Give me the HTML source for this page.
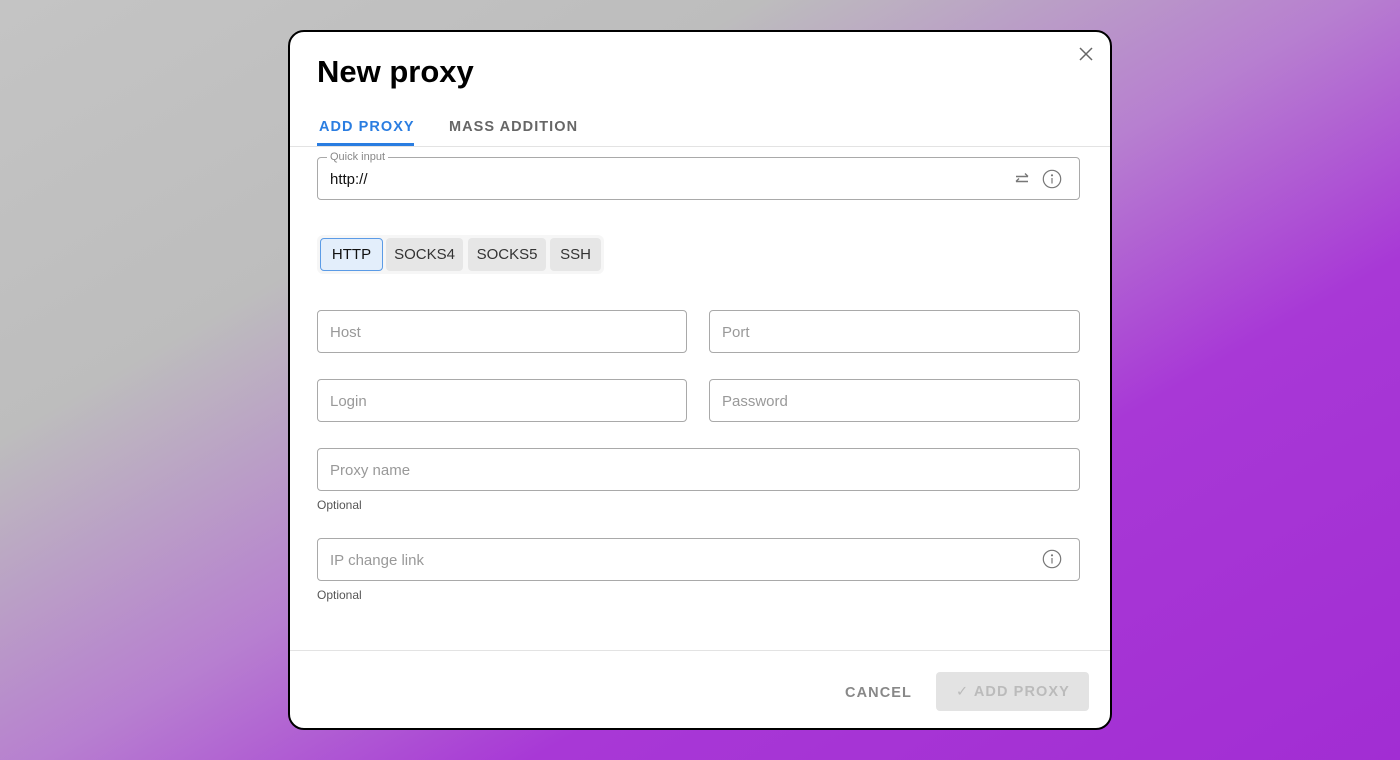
<!DOCTYPE html>
<html><head><style>
*{box-sizing:border-box;margin:0;padding:0}
body{width:1400px;height:760px;overflow:hidden;font-family:"Liberation Sans",Arial,sans-serif;background:linear-gradient(150deg,#c4c4c4 0%,#bdbdbd 28%,#b77fd0 50%,#a838d6 68%,#a22dd3 100%);position:relative}
.dlg{position:absolute;left:288px;top:30px;width:824px;height:700px;background:#fff;border:2px solid #000;border-radius:16px;overflow:hidden}
.w{position:absolute;left:-2px;top:-2px;width:824px;height:700px}
.a{position:absolute}
h1{position:absolute;left:29px;top:24px;font-size:31px;font-weight:700;color:#000}
.tab{position:absolute;top:89px;font-size:14.5px;font-weight:700;letter-spacing:1.05px}
.inp{position:absolute;border:1px solid #a9a9a9;border-radius:4px;height:43px;font-size:15px;color:#999;padding:13px 12px}
.opt{position:absolute;font-size:12px;color:#555}
.chip{position:absolute;top:207px;height:33px;background:#e6e6e6;border-radius:4px;font-size:15px;color:#333;text-align:center;line-height:33px}
</style></head><body>
<div class="dlg"><div class="w">
<h1>New proxy</h1>
<svg class="a" style="left:791px;top:17px" width="14" height="14" viewBox="0 0 14 14"><path d="M1 1L13 13M13 1L1 13" stroke="#666" stroke-width="1.5"/></svg>
<div class="tab" style="left:31px;color:#2a7de1">ADD PROXY</div>
<div class="tab" style="left:161px;color:#666">MASS ADDITION</div>
<div class="a" style="left:29px;top:113px;width:97px;height:3px;background:#2a7de1"></div>
<div class="a" style="left:0;top:116px;width:824px;height:1px;background:#e3e3e3"></div>
<div class="inp" style="left:29px;top:127px;width:763px;color:#111;padding-top:13px">http://</div>
<div class="a" style="left:39px;top:121px;background:#fff;padding:0 3px;font-size:11px;color:#888">Quick input</div>
<svg class="a" style="left:725px;top:140px" width="18" height="18" viewBox="0 0 18 18" fill="none" stroke="#777" stroke-width="1.4"><path d="M3 6.5H15M12 3.5L15 6.5M15 11.5H3M6 8.5L3 11.5"/></svg>
<svg class="a" style="left:754px;top:139px" width="20" height="20" viewBox="0 0 20 20" fill="none" stroke="#777" stroke-width="1.2"><circle cx="10" cy="10" r="8.7"/><path d="M10 9V14.5"/><circle cx="10" cy="6.3" r=".5" fill="#777"/></svg>
<div class="a" style="left:29px;top:205px;width:287px;height:39px;background:#f6f6f6;border-radius:6px"></div>
<div class="chip" style="left:32px;top:208px;width:63px;background:#e3eefb;border:1px solid #5b9be6;color:#111;line-height:31px">HTTP</div>
<div class="chip" style="left:98px;top:208px;width:77px">SOCKS4</div>
<div class="chip" style="left:180px;top:208px;width:78px">SOCKS5</div>
<div class="chip" style="left:262px;top:208px;width:51px">SSH</div>
<div class="inp" style="left:29px;top:280px;width:370px">Host</div>
<div class="inp" style="left:421px;top:280px;width:371px">Port</div>
<div class="inp" style="left:29px;top:349px;width:370px">Login</div>
<div class="inp" style="left:421px;top:349px;width:371px">Password</div>
<div class="inp" style="left:29px;top:418px;width:763px">Proxy name</div>
<div class="opt" style="left:29px;top:468px">Optional</div>
<div class="inp" style="left:29px;top:508px;width:763px">IP change link</div>
<svg class="a" style="left:754px;top:519px" width="20" height="20" viewBox="0 0 20 20" fill="none" stroke="#777" stroke-width="1.2"><circle cx="10" cy="10" r="8.7"/><path d="M10 9V14.5"/><circle cx="10" cy="6.3" r=".5" fill="#777"/></svg>
<div class="opt" style="left:29px;top:558px">Optional</div>
<div class="a" style="left:0;top:620px;width:824px;height:1px;background:#e3e3e3"></div>
<div class="a" style="left:557px;top:655px;font-size:14.5px;font-weight:700;letter-spacing:1.1px;color:#888">CANCEL</div>
<div class="a" style="left:648px;top:642px;width:153px;height:39px;background:#e3e3e3;border-radius:4px;color:#bbb;font-size:14.5px;font-weight:700;letter-spacing:1.1px;line-height:41px;padding-left:20px"><span style="font-weight:400">✓</span> ADD PROXY</div>
</div></div>
</body></html>
